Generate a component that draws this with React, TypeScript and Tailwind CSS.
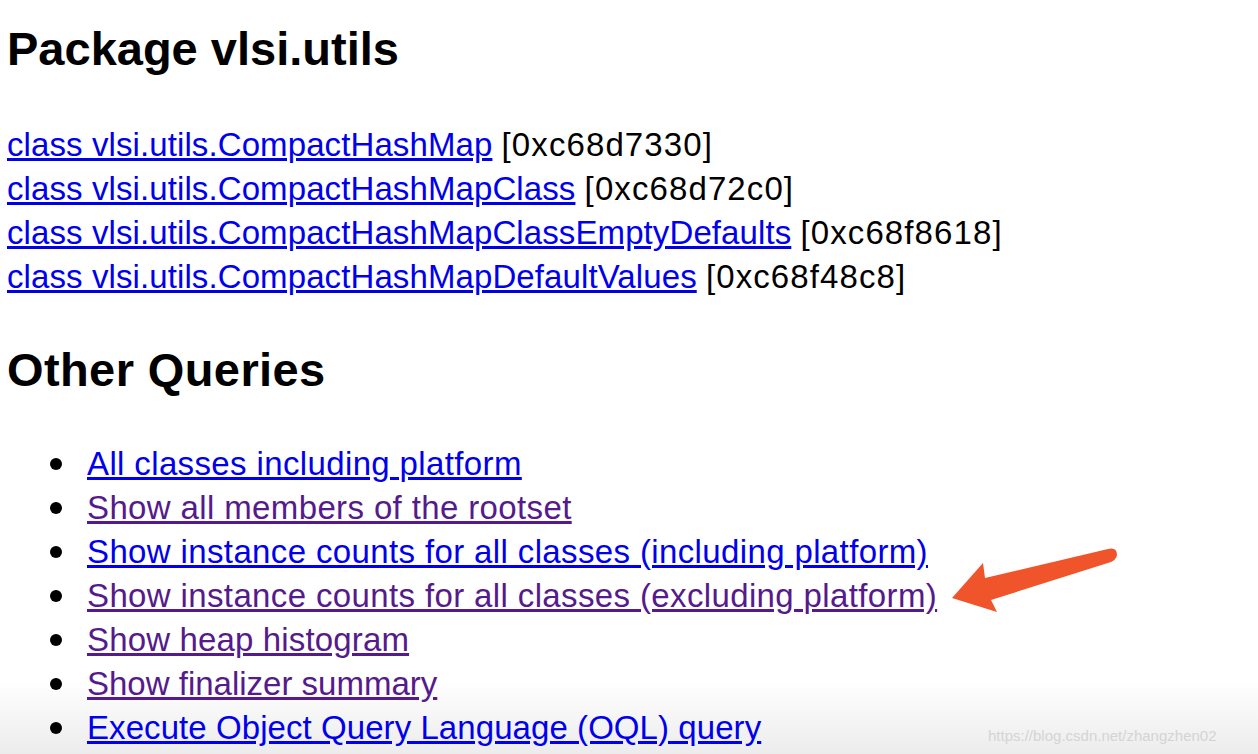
import * as React from "react";

const classes = [
  { name: "class vlsi.utils.CompactHashMap", addr: "[0xc68d7330]" },
  { name: "class vlsi.utils.CompactHashMapClass", addr: "[0xc68d72c0]" },
  { name: "class vlsi.utils.CompactHashMapClassEmptyDefaults", addr: "[0xc68f8618]" },
  { name: "class vlsi.utils.CompactHashMapDefaultValues", addr: "[0xc68f48c8]" },
];

// per-row tracking nudges the Arial-width font toward the original's glyph widths
const queries = [
  { label: "All classes including platform", visited: false, track: "tracking-[0.37px]" },
  { label: "Show all members of the rootset", visited: true, track: "tracking-[0.37px]" },
  { label: "Show instance counts for all classes (including platform)", visited: false, track: "tracking-[0.37px]" },
  { label: "Show instance counts for all classes (excluding platform)", visited: true, track: "tracking-[0.37px]" },
  { label: "Show heap histogram", visited: true, track: "tracking-[0.15px]" },
  { label: "Show finalizer summary", visited: true, track: "tracking-normal" },
  { label: "Execute Object Query Language (OQL) query", visited: false, track: "tracking-[0.07px]" },
];

export default function App() {
  return (
    <div
      className="relative h-[754px] w-[1258px] overflow-hidden bg-[linear-gradient(to_bottom,#ffffff_0px,#ffffff_680px,#ececec_754px)] pl-[7px] pt-[21px] text-black"
      style={{ fontFamily: '"Liberation Sans", Arial, sans-serif' }}
    >
      <h2 className="text-[47px] font-bold leading-[56px]">Package vlsi.utils</h2>

      <div className="mt-[46px] text-[33px] leading-[44px]">
        {classes.map((c) => (
          <div key={c.addr}>
            <a href="#" className="tracking-[0.1px] text-[#0000ee] underline">
              {c.name}
            </a>{" "}
            <span className="tracking-[1.1px]">{c.addr}</span>
          </div>
        ))}
      </div>

      <h2 className="mt-[43px] text-[47px] font-bold leading-[56px] tracking-[0.4px]">Other Queries</h2>

      <ul className="mt-[44px] pl-[43px] text-[33px] leading-[44px]">
        {queries.map((q) => (
          <li key={q.label} className="flex items-center">
            <span className="mr-[25px] h-3 w-3 shrink-0 rounded-full bg-black" />
            <a
              href="#"
              className={
                q.track + (q.visited ? " text-[#551a8b] underline" : " text-[#0000ee] underline")
              }
            >
              {q.label}
            </a>
          </li>
        ))}
      </ul>

      {/* annotation arrow */}
      <svg
        className="absolute left-[940px] top-[540px]"
        width="190"
        height="80"
        viewBox="940 540 190 80"
      >
        <path
          d="M952 598 L983 563 L985 578 L1108 549 Q1117 547 1117 555 Q1116 560 1111 562 L991 600 L997 612 Z"
          fill="#f0542a"
        />
      </svg>

      <div className="absolute left-[988px] top-[726px] text-[15px] leading-[20px] text-[#d4d4d4]">
        https://blog.csdn.net/zhangzhen02
      </div>
    </div>
  );
}
